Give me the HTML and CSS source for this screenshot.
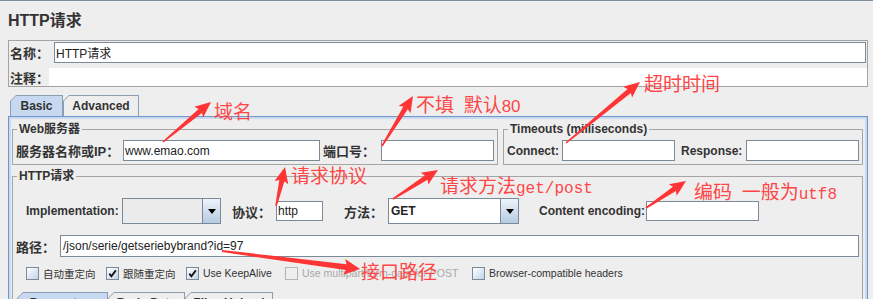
FILE: index.html
```html
<!DOCTYPE html>
<html>
<head>
<meta charset="utf-8">
<link rel="stylesheet" href="styles.css">
</head>
<body>
<div class="page">
  <div class="title">HTTP请求</div>
  <div class="namebox">
    <div class="nrow">
      <span class="nlabel">名称：</span>
      <div class="field namefield">HTTP请求</div>
    </div>
    <div class="nrow crow">
      <span class="clabel">注释：</span>
      <div class="comment"></div>
    </div>
  </div>
  <div class="tabs">
    <div class="tab sel tab-basic"><span>Basic</span></div>
    <div class="tab tab-adv"><span>Advanced</span></div>
  </div>
  <div class="panel">
    <div class="panel-in">
      <div class="toprow">
        <fieldset class="grp web">
          <legend>Web服务器</legend>
          <div class="row">
            <span class="lbl cn w-server">服务器名称或IP：</span>
            <div class="field f-server">www.emao.com</div>
            <span class="lbl cn w-port">端口号：</span>
            <div class="field f113"></div>
          </div>
        </fieldset>
        <fieldset class="grp timeouts">
          <legend>Timeouts (milliseconds)</legend>
          <div class="row">
            <span class="lbl w-connect">Connect:</span>
            <div class="field f113"></div>
            <span class="lbl w-resp">Response:</span>
            <div class="field f113"></div>
          </div>
        </fieldset>
      </div>
      <fieldset class="grp http">
        <legend>HTTP请求</legend>
        <div class="implrow">
          <span class="lbl w-impl">Implementation:</span>
          <div class="combo combo-impl"><div class="ctext gray"></div><div class="cbtn"></div></div>
          <span class="lbl cn w-proto">协议：</span>
          <div class="field f-proto">http</div>
          <span class="lbl cn w-method">方法：</span>
          <div class="combo combo-method"><div class="ctext">GET</div><div class="cbtn"></div></div>
          <span class="lbl w-enc">Content encoding:</span>
          <div class="field f113 f-enc"></div>
        </div>
        <div class="pathrow">
          <span class="lbl cn w-path">路径：</span>
          <div class="field f-path">/json/serie/getseriebybrand?id=97</div>
        </div>
        <div class="cbrow">
          <div class="cb cb1"><span class="box"></span><span class="cbl cjk">自动重定向</span></div>
          <div class="cb cb2"><span class="box"><svg width="9" height="9" viewBox="0 0 9 9"><path d="M1.3,4.6 L3.4,7.2 L7.8,1.4" fill="none" stroke="#111" stroke-width="1.8"/></svg></span><span class="cbl cjk">跟随重定向</span></div>
          <div class="cb cb3"><span class="box"><svg width="9" height="9" viewBox="0 0 9 9"><path d="M1.3,4.6 L3.4,7.2 L7.8,1.4" fill="none" stroke="#111" stroke-width="1.8"/></svg></span><span class="cbl">Use KeepAlive</span></div>
          <div class="cb cb4 disabled"><span class="box"></span><span class="cbl">Use multipart/form-data for POST</span></div>
          <div class="cb cb5"><span class="box"></span><span class="cbl">Browser-compatible headers</span></div>
        </div>
        <div class="btabs">
          <div class="tab sel bt1"><span>Parameters</span></div>
          <div class="tab bt2"><span>Body Data</span></div>
          <div class="tab bt3"><span>Files Upload</span></div>
        </div>
      </fieldset>
    </div>
  </div>
</div>

<svg class="arrows" width="873" height="299" viewBox="0 0 873 299">
  <g fill="#ff3434">
    <path transform="translate(163 142) rotate(-39.8)" d="M0,-0.8L48.5,-2.6L46.5,-7L62.5,0L46.5,7L48.5,2.6L0,0.8Z"/>
    <path transform="translate(382 146) rotate(-58.2)" d="M0,-0.8L44.8,-2.6L42.8,-7L58.8,0L42.8,7L44.8,2.6L0,0.8Z"/>
    <path transform="translate(566 143) rotate(-39.5)" d="M0,-0.8L81.9,-2.6L79.9,-7L95.9,0L79.9,7L81.9,2.6L0,0.8Z"/>
    <path transform="translate(276 206) rotate(-77)" d="M0,-0.8L26,-2.6L24,-7L40,0L24,7L26,2.6L0,0.8Z"/>
    <path transform="translate(393 199) rotate(-32.8)" d="M0,-0.8L39.5,-2.6L37.5,-7L53.5,0L37.5,7L39.5,2.6L0,0.8Z"/>
    <path transform="translate(646 208) rotate(-34)" d="M0,-0.8L34.3,-2.6L32.3,-7L48.3,0L32.3,7L34.3,2.6L0,0.8Z"/>
    <path transform="translate(222 251) rotate(7.4)" d="M0,-1L125.2,-3L123.2,-8L139.2,0L123.2,8L125.2,3L0,1Z"/>
  </g>
</svg>
<div class="notes">
  <span class="note n1">域名</span>
  <span class="note n2">不填<span class="m"> </span>默认<span class="s">80</span></span>
  <span class="note n3">超时时间</span>
  <span class="note n4">请求协议</span>
  <span class="note n5">请求方法<span class="m">get/post</span></span>
  <span class="note n6">编码<span class="m"> </span>一般为<span class="m">utf8</span></span>
  <span class="note n7">接口路径</span>
</div>
</body>
</html>
```
FILE: styles.css
```css
* { box-sizing: border-box; }
html, body { margin: 0; padding: 0; }
body {
  width: 873px;
  height: 299px;
  overflow: hidden;
  position: relative;
  background: #eeeeee;
  font-family: "Liberation Sans", "Noto Sans CJK SC", sans-serif;
  color: #333;
}
.page { border-top: 1px solid #7f8fa0; height: 299px; overflow: hidden; }

.title {
  height: 39px;
  padding: 10px 0 0 8px;
  font-size: 16px;
  font-weight: bold;
  line-height: 20px;
  color: #333;
}

.namebox {
  margin: 0 5px 0 8px;
  border: 1px solid #a3a3a3;
  height: 47px;
}
.nrow { display: flex; align-items: center; height: 22px; }
.nlabel { width: 45px; padding-left: 1px; font-size: 13px; font-weight: bold; }
.namefield { width: 812px; height: 22px; padding-left: 2px; font-size: 12px; }
.crow { margin-top: 5px; height: 18px; }
.clabel { width: 40px; padding-left: 1px; font-size: 13px; font-weight: bold; }
.comment { flex: 1; height: 18px; background: #fff; }

.field {
  background: #fff;
  border: 1px solid #7a8a99;
  height: 21px;
  display: flex;
  align-items: center;
  padding-left: 1px;
  font-size: 12px;
  color: #222;
  white-space: nowrap;
  overflow: hidden;
}

/* tabs */
.tabs { display: flex; margin: 8px 0 0 10px; height: 21px; }
.tab {
  display: flex;
  height: 21px;
  padding: 1px 1px 0 1px;
  background: #8e9db0;
  clip-path: polygon(0 6px, 6px 0, 100% 0, 100% 100%, 0 100%);
}
.tab span {
  flex: 1;
  display: flex;
  align-items: center;
  justify-content: center;
  background: #eeeeee;
  clip-path: polygon(0 5px, 5px 0, 100% 0, 100% 100%, 0 100%);
  font-size: 12px;
  font-weight: bold;
  color: #333;
}
.tab.sel span { background: #c6d9f1; }
.tab-basic { width: 53px; }
.tab-adv { width: 76px; }

.panel {
  margin: 0 5px 0 8px;
  border: 1px solid #7394cb;
  border-bottom: none;
  height: 200px;
}
.panel-in {
  border: 2px solid #c8daf0;
  border-bottom: none;
  height: 200px;
}

.toprow { display: flex; gap: 5px; margin: 3px 0 0 1px; }

fieldset.grp {
  margin: 0;
  padding: 0 3px;
  border: 1px solid #a5a5a5;
  min-width: 0;
}
legend {
  margin-left: 1px;
  padding: 0 2px;
  font-size: 12px;
  font-weight: bold;
  line-height: 14px;
  color: #333;
}
fieldset.web { width: 486px; padding-top: 4px; padding-bottom: 3px; }
fieldset.timeouts { width: 360px; padding-top: 4px; padding-bottom: 3px; }

.row { display: flex; align-items: center; height: 21px; }
.lbl { font-size: 12px; font-weight: bold; color: #333; white-space: nowrap; }
.lbl.cn { font-size: 13px; }
.w-server { width: 107px; }
.f-server { width: 197px; }
.w-port { width: 58px; margin-left: 3px; }
.f113 { width: 113px; }
.w-connect { width: 55px; }
.w-resp { width: 65px; margin-left: 6px; }

fieldset.http {
  width: 851px;
  margin: 4px 0 0 1px;
  padding: 15px 3px 0 3px;
  height: 160px;
}
.implrow { display: flex; align-items: center; height: 26px; padding-left: 10px; }
.w-impl { width: 96px; }
.combo { display: flex; height: 26px; border: 1px solid #7a8a99; }
.combo-impl { width: 99px; }
.combo-method { width: 131px; }
.ctext {
  flex: 1;
  background: #fff;
  display: flex;
  align-items: center;
  padding-left: 2px;
  font-size: 12px;
  font-weight: bold;
  color: #222;
}
.ctext.gray { background: #ebebeb; }
.cbtn {
  width: 18px;
  border-left: 1px solid #7a8a99;
  background: linear-gradient(#eef3f9, #b6cbe2);
  display: flex;
  align-items: center;
  justify-content: center;
}
.cbtn::after {
  content: "";
  border-left: 4px solid transparent;
  border-right: 4px solid transparent;
  border-top: 5px solid #000;
}
.w-proto { width: 44px; margin-left: 11px; }
.f-proto { width: 47px; height: 20px; }
.w-method { width: 44px; margin-left: 21px; }
.w-enc { width: 107px; margin-left: 20px; }
.f-enc { height: 20px; }

.pathrow { display: flex; align-items: center; height: 22px; margin-top: 11px; }
.w-path { width: 44px; }
.f-path { width: 799px; height: 22px; padding-left: 2px; }

.cbrow { display: flex; align-items: center; height: 14px; margin-top: 9px; padding-left: 10px; }
.cb { display: flex; align-items: center; font-size: 10.5px; color: #333; white-space: nowrap; }
.cb1 { width: 80px; }
.cb2 { width: 80px; }
.cb3 { width: 99px; }
.cb4 { width: 187px; }
.box {
  width: 13px;
  height: 13px;
  border: 1px solid #7a8a99;
  background: linear-gradient(135deg, #ffffff, #c2d3e8);
  margin-right: 4px;
  display: flex;
  align-items: center;
  justify-content: center;
}
.cjk { font-size: 10.5px; }
.disabled { color: #a8a8a8; }
.disabled .box { border-color: #b5b5b5; background: #eeeeee; }

.btabs { display: flex; margin-top: 12px; padding-left: 1px; height: 20px; }
.btabs .tab { height: 20px; }
.bt1 { width: 91px; }
.bt2 { width: 77px; }
.bt3 { width: 88px; }

/* annotations */
.arrows { position: absolute; left: 0; top: 0; pointer-events: none; }
.notes { position: absolute; left: 0; top: 0; width: 873px; height: 299px; pointer-events: none; }
.note {
  position: absolute;
  font-family: "Noto Sans CJK SC", sans-serif;
  font-size: 19px;
  line-height: 19px;
  color: #ff4646;
  white-space: pre;
}
.note .m { font-family: "Liberation Mono", monospace; font-size: 16px; }
.note .s { font-family: "Liberation Sans", sans-serif; font-size: 17px; }
.n1 { left: 214px; top: 101px; }
.n2 { left: 416px; top: 94px; }
.n3 { left: 644px; top: 73px; }
.n4 { left: 291px; top: 165px; }
.n5 { left: 440px; top: 175px; }
.n6 { left: 694px; top: 181px; }
.n7 { left: 361px; top: 261px; }
```
